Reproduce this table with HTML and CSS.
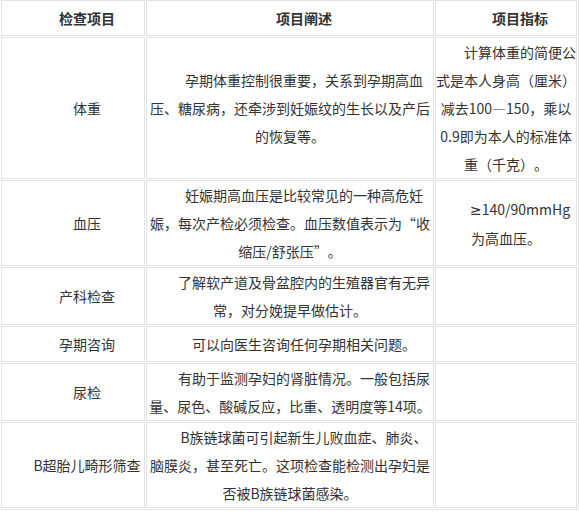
FILE: index.html
```html
<!DOCTYPE html>
<html lang="zh-CN">
<head>
<meta charset="utf-8">
<title>孕期检查项目</title>
<link rel="stylesheet" href="styles.css">
</head>
<body>
<table class="exam-table">
  <colgroup>
    <col class="col-name">
    <col class="col-desc">
    <col class="col-index">
  </colgroup>
  <thead>
    <tr class="row-single">
      <th>检查项目</th>
      <th>项目阐述</th>
      <th>项目指标</th>
    </tr>
  </thead>
  <tbody>
    <tr>
      <td>体重</td>
      <td>孕期体重控制很重要，关系到孕期高血压、糖尿病，还牵涉到妊娠纹的生长以及产后的恢复等。</td>
      <td>计算体重的简便公式是本人身高（厘米）减去100—150，乘以0.9即为本人的标准体重（千克）。</td>
    </tr>
    <tr>
      <td>血压</td>
      <td>妊娠期高血压是比较常见的一种高危妊娠，每次产检必须检查。血压数值表示为“收缩压/舒张压”。</td>
      <td><span class="sym">≥</span>140/90mmHg为高血压。</td>
    </tr>
    <tr>
      <td>产科检查</td>
      <td>了解软产道及骨盆腔内的生殖器官有无异常，对分娩提早做估计。</td>
      <td></td>
    </tr>
    <tr class="row-single">
      <td>孕期咨询</td>
      <td>可以向医生咨询任何孕期相关问题。</td>
      <td></td>
    </tr>
    <tr>
      <td>尿检</td>
      <td>有助于监测孕妇的肾脏情况。一般包括尿量、尿色、酸碱反应，比重、透明度等14项。</td>
      <td></td>
    </tr>
    <tr>
      <td>B超胎儿畸形筛查</td>
      <td>B族链球菌可引起新生儿败血症、肺炎、脑膜炎，甚至死亡。这项检查能检测出孕妇是否被B族链球菌感染。</td>
      <td></td>
    </tr>
  </tbody>
</table>
</body>
</html>
```

FILE: styles.css
```css
html, body {
  margin: 0;
  padding: 0;
  background: #ffffff;
}

.exam-table {
  width: 580px;
  margin: -2px 0 0 -1px;
  table-layout: fixed;
  border-collapse: separate;
  border-spacing: 1px;
  border: 1px solid #e3e3e3;
  font-family: "Noto Sans CJK SC", "Noto Sans", sans-serif;
  font-size: 14px;
  line-height: 28px;
  color: #333333;
  text-spacing-trim: space-all;
}

.col-name { width: 144px; }
.col-desc { width: 288px; }
.col-index { width: 142px; }

.exam-table th,
.exam-table td {
  box-sizing: border-box;
  border: 1px solid #e3e3e3;
  padding: 0;
  text-align: center;
  text-indent: 2em;
  vertical-align: middle;
}

.exam-table th {
  font-weight: bold;
}

.row-single th,
.row-single td {
  height: 36px;
}

.sym {
  font-family: "DejaVu Sans", "Noto Sans", sans-serif;
}
```
